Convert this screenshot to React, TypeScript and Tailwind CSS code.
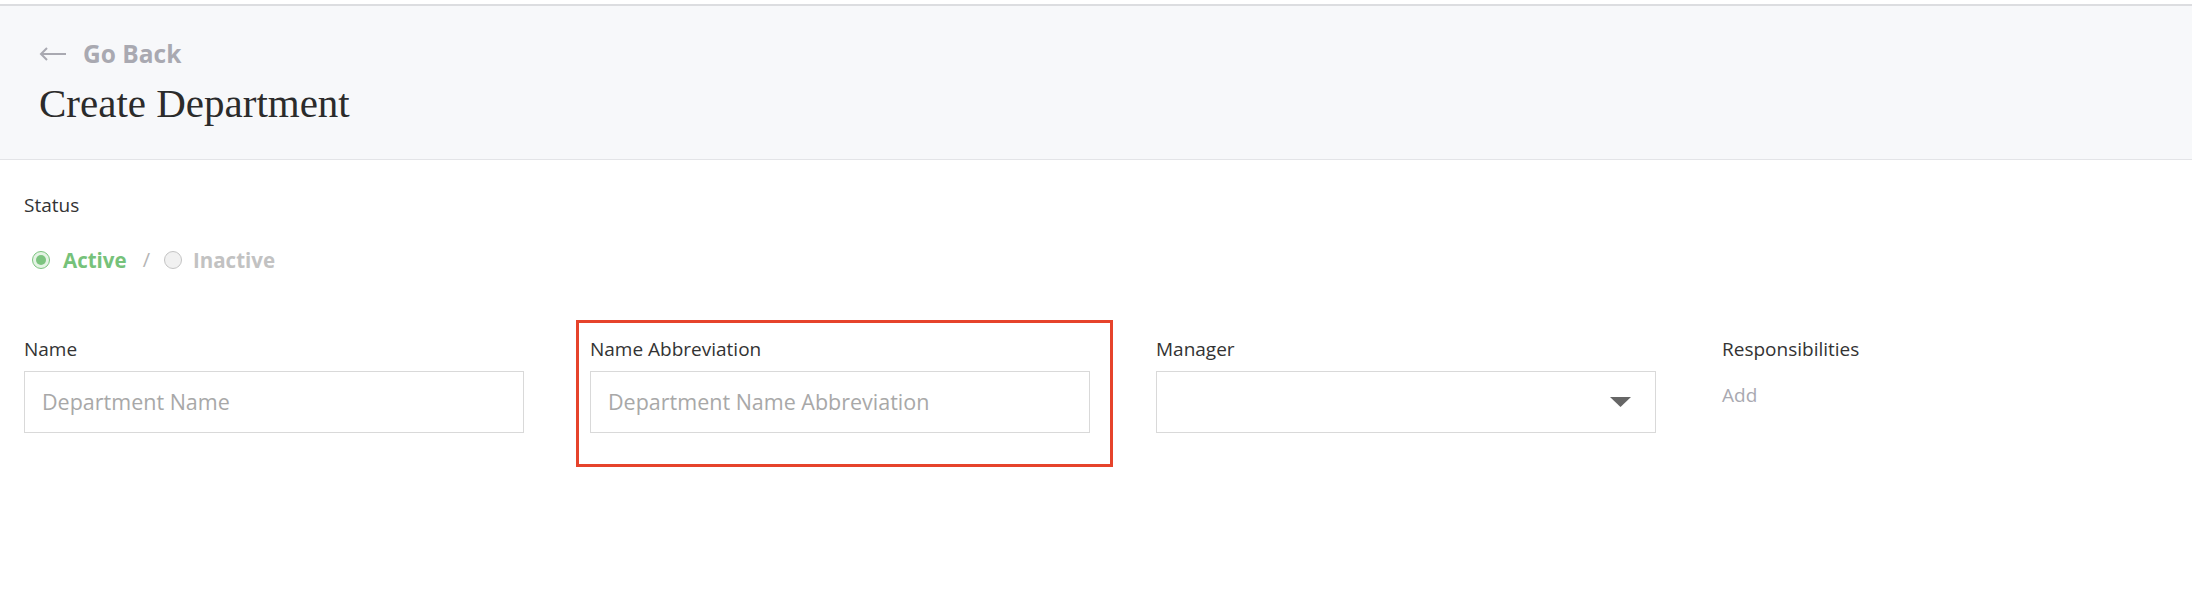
import React from "react";

const sans = { fontFamily: "'Open Sans', Lato, sans-serif" };

function Field({ label, placeholder }: { label: string; placeholder: string }) {
  return (
    <div className="flex w-[500px] flex-col">
      <div className="text-[19px] leading-[24px] text-[#333333]">{label}</div>
      <div className="mt-[10px] flex h-[62px] items-center border border-[#d9d9d9] bg-white px-[17px]">
        <span className="text-[21.5px] text-[#a8a8a8]">{placeholder}</span>
      </div>
    </div>
  );
}

export default function App() {
  return (
    <div className="min-h-[600px] bg-white pt-[4px]" style={sans}>
      <div className="h-[2px] bg-[#dcdde0]" />
      <div className="border-b border-[#e3e4e7] bg-[#f7f8fa] pl-[39px] pt-[32px] pb-[32px]">
        <div className="flex items-center gap-[16px] text-[#a9a9b1]">
          <svg width="28" height="14" viewBox="0 0 28 14" fill="none">
            <path d="M27 7H2M8 1L2 7l6 6" stroke="#a9a9b1" strokeWidth="2" />
          </svg>
          <span className="text-[24.5px] font-bold leading-[32px]">Go Back</span>
        </div>
        <h1
          className="mt-[9px] text-[41px] leading-[48px] text-[#2b2b2b]"
          style={{ fontFamily: "'Liberation Serif', serif" }}
        >
          Create Department
        </h1>
      </div>

      <div className="pl-[24px]">
        <div className="mt-[33px] text-[19px] leading-[24px] text-[#333333]">Status</div>
        <div className="mt-[29px] flex h-[28px] items-center">
          <span className="ml-[8px] flex h-[18px] w-[18px] items-center justify-center rounded-full border border-[#7cc47f] bg-[#e4f3e4]">
            <span className="h-[10px] w-[10px] rounded-full bg-[#7cc47f]" />
          </span>
          <span className="ml-[13px] text-[20.5px] font-bold text-[#76c27a]">Active</span>
          <span className="ml-[16px] text-[20px] text-[#b5b5b5]">/</span>
          <span className="ml-[14px] h-[18px] w-[18px] rounded-full border border-[#c4c4c4] bg-[#f1f1f1]" />
          <span className="ml-[11px] text-[20.5px] font-bold text-[#c2c2c2]">Inactive</span>
        </div>

        <div className="mt-[63px] flex gap-[66px]">
          <Field label="Name" placeholder="Department Name" />
          <div className="relative">
            <div className="pointer-events-none absolute left-[-14px] top-[-17px] h-[147px] w-[537px] border-[3px] border-[#e6432b]" />
            <Field label="Name Abbreviation" placeholder="Department Name Abbreviation" />
          </div>
          <div className="flex w-[500px] flex-col">
            <div className="text-[19px] leading-[24px] text-[#333333]">Manager</div>
            <div className="mt-[10px] flex h-[62px] items-center justify-end border border-[#d9d9d9] bg-white pr-[24px]">
              <svg width="21" height="10" viewBox="0 0 21 10">
                <path d="M0 0h21L10.5 10z" fill="#666666" />
              </svg>
            </div>
          </div>
          <div className="flex flex-col">
            <div className="text-[19px] leading-[24px] text-[#333333]">Responsibilities</div>
            <div className="mt-[22px] text-[19px] leading-[24px] text-[#a9a9b1]">Add</div>
          </div>
        </div>
      </div>
    </div>
  );
}
